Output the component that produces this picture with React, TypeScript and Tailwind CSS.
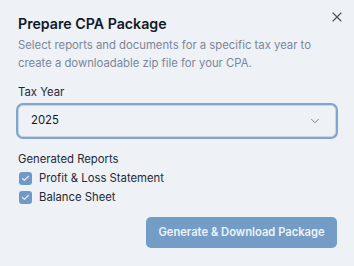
import { Check, ChevronDown, X } from "lucide-react";

const reports = ["Profit & Loss Statement", "Balance Sheet"];

export default function App() {
  return (
    <div className="relative w-[354px] h-[266px] bg-[#eef1f5] px-[18px] pt-[14px] font-['Inter',sans-serif] text-[#1f2937]">
      {/* close */}
      <button className="absolute right-[9px] top-[9px] text-[#4b5563]">
        <X size={16} strokeWidth={1.75} />
      </button>

      {/* header */}
      <h2 className="text-[14.2px] leading-[20px] font-semibold text-[#111827]">
        Prepare CPA Package
      </h2>
      <p className="mt-[1.5px] text-[11.3px] leading-[18px] text-[#7b879a]">
        Select reports and documents for a specific tax year to create a
        downloadable zip file for your CPA.
      </p>

      {/* tax year */}
      <label className="block mt-[12px] text-[11.3px] leading-[16px]">
        Tax Year
      </label>
      <div className="mt-[5px] h-[32px] flex items-center justify-between rounded-[5px] border border-[#c9d6e4] bg-[#eef2f6] pl-[12px] pr-[13px] ring-2 ring-[#80a6cf]">
        <span className="text-[11.3px] text-[#111827]">2025</span>
        <ChevronDown size={14} strokeWidth={1.5} className="text-[#6b7280]" />
      </div>

      {/* reports */}
      <div className="mt-[14px] text-[11.3px] leading-[16px]">
        Generated Reports
      </div>
      <div className="mt-[2px] flex flex-col">
        {reports.map((r) => (
          <div key={r} className="h-[19px] flex items-center gap-[7px] pl-[1px]">
            <span className="w-[13px] h-[13px] rounded-[3px] bg-[#7099c5] flex items-center justify-center">
              <Check size={9} strokeWidth={3} className="text-[#e8eff7]" />
            </span>
            <span className="text-[11.3px]">{r}</span>
          </div>
        ))}
      </div>

      {/* action */}
      <div className="mt-[10px] flex justify-end">
        <button className="w-[191px] h-[31px] rounded-[5px] bg-[#739dc7] text-[11.2px] font-semibold text-[#eef3f9] -mr-[1px]">
          Generate &amp; Download Package
        </button>
      </div>
    </div>
  );
}
